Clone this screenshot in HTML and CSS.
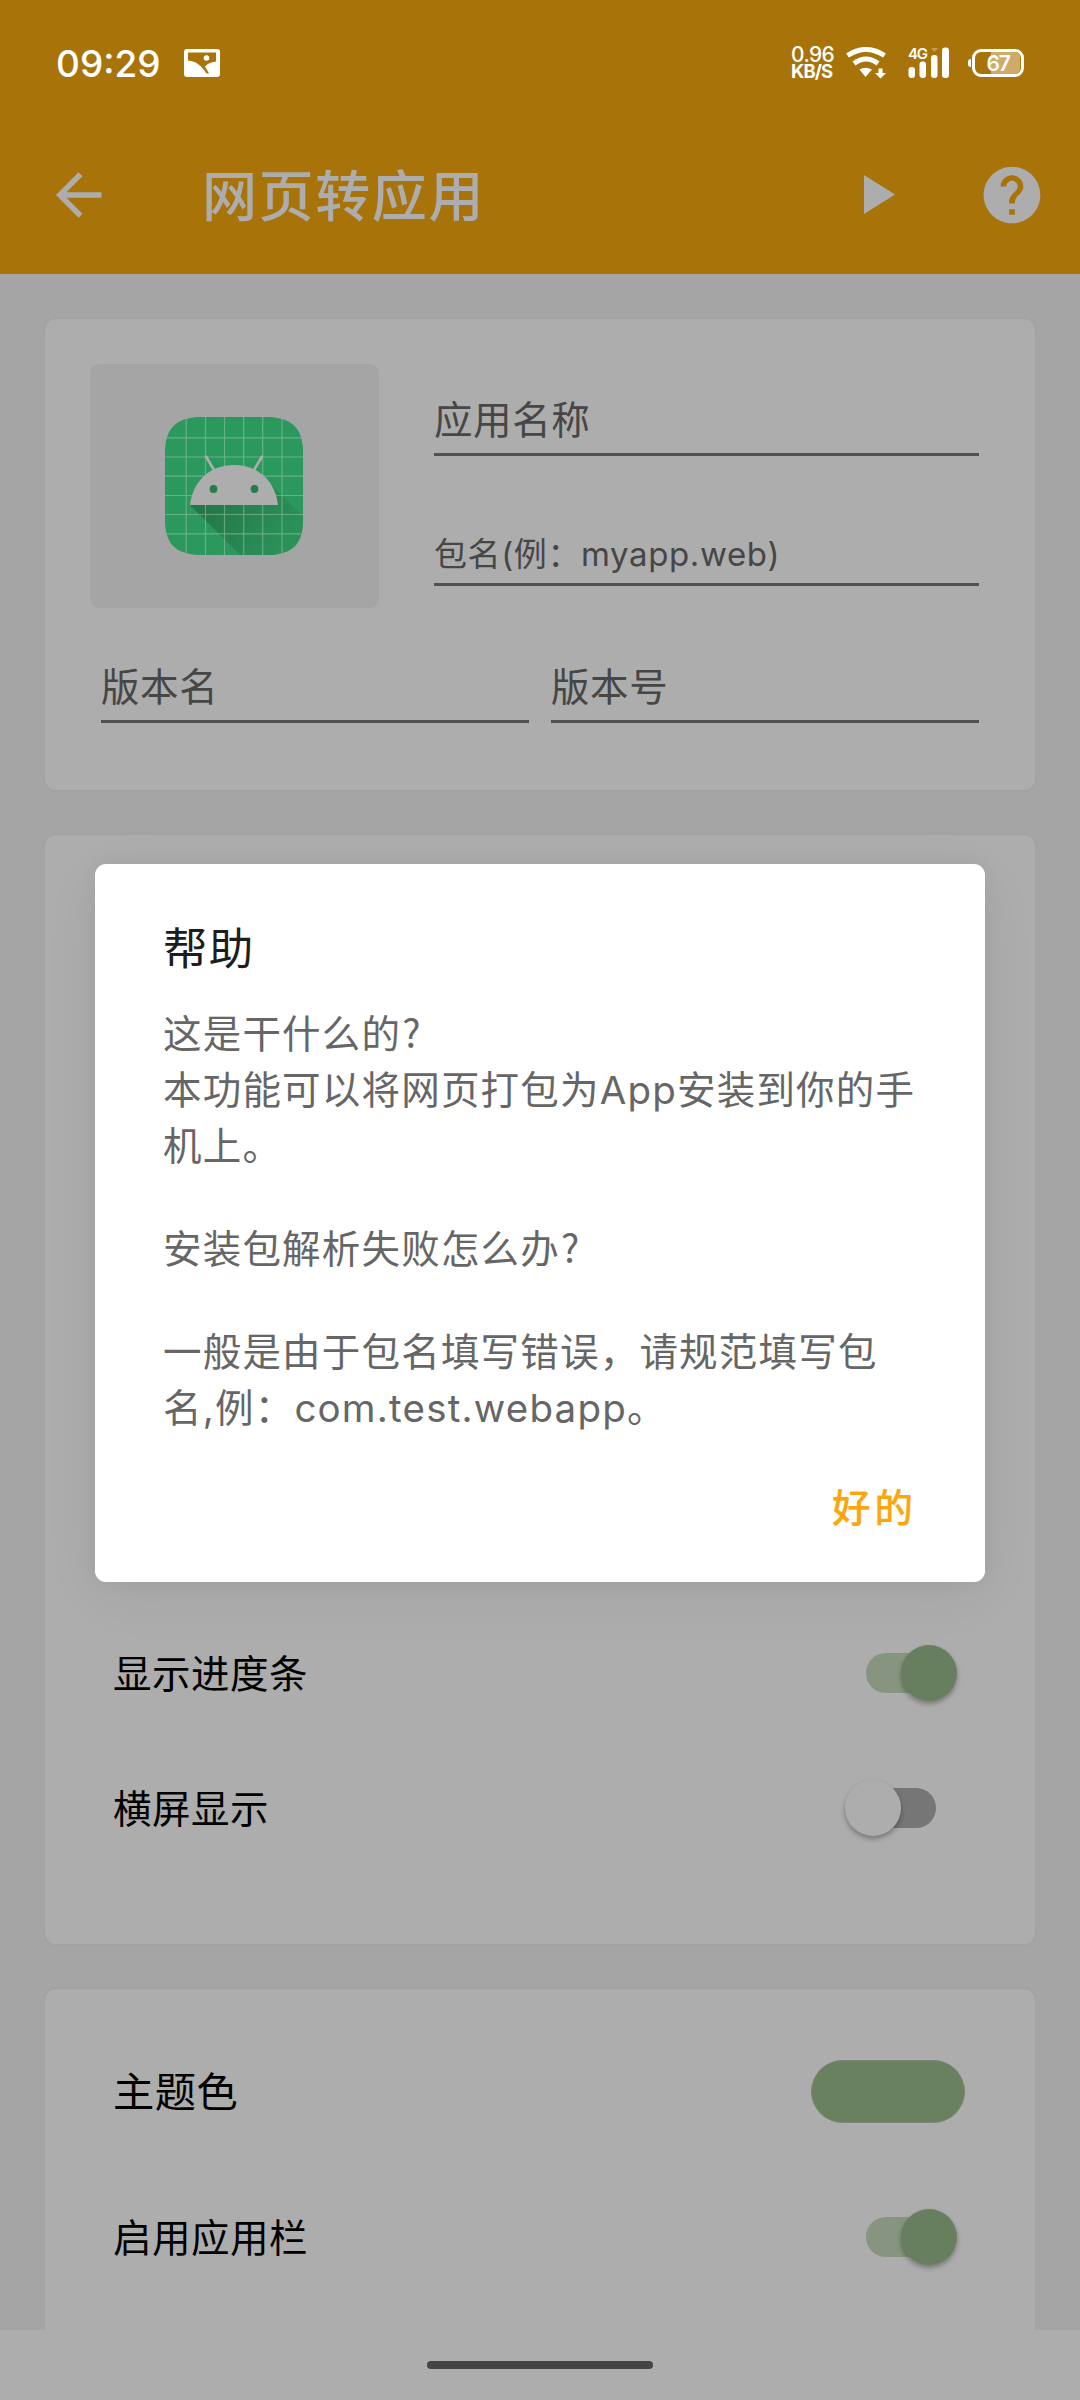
FILE: index.html
```
<!DOCTYPE html>
<html lang="zh-CN">
<head>
<meta charset="utf-8">
<title>网页转应用</title>
<link rel="stylesheet" href="styles.css">
</head>
<body>
<div class="screen">
  <header class="header">
    <div class="status">
      <span class="clock">09:29</span>
      <svg class="picture" width="36" height="28" viewBox="0 0 36 28">
        <path fill="#fff" fill-rule="evenodd" d="M3 0H33Q36 0 36 3V25Q36 28 33 28H3Q0 28 0 25V3Q0 0 3 0ZM4 3.500V11.500C12 12 18 17 22.500 24.500H25L21 17.500C23 15 27 13 32 12.500V3.500Z"/>
        <circle cx="22.500" cy="9" r="2.800" fill="#fff"/>
      </svg>
      <div class="status-right">
        <div class="rate"><span>0.96</span><b>KB/S</b></div>
        <svg class="wifi" width="40" height="32" viewBox="0 0 40 32">
          <g fill="none" stroke="#fff" stroke-width="5">
            <path d="M1.500 8.500Q20 -3.500 38.500 8.500"/>
            <path d="M8 16.500Q20 7.500 32 16.500"/>
          </g>
          <path fill="#fff" d="M13.500 22.500Q19.500 19 26 22.500L19.500 30ZM32.500 21.500h4v4.500h3.500L34.500 31.500L29 26h3.500Z"/>
        </svg>
        <div class="signal">
          <span class="gen">4G</span>
          <svg width="42" height="32" viewBox="0 0 42 32">
            <g fill="#fff">
              <rect x="0.500" y="20" width="6.500" height="11" rx="3"/>
              <rect x="11.500" y="14.500" width="6.500" height="16.500" rx="3"/>
              <rect x="23" y="8" width="6.500" height="23" rx="3"/>
              <rect x="34" y="0.500" width="7" height="30.500" rx="3"/>
            </g>
            <path fill="#fff" opacity=".3" d="M23 1h7l-3.500 4z"/>
          </svg>
        </div>
        <div class="battery"><i></i><span>67</span></div>
      </div>
    </div>
    <div class="toolbar">
      <svg class="back" width="46" height="46" viewBox="0 0 46 46"><path fill="none" stroke="#adadad" stroke-width="5.500" d="M24.500 2.300L3.800 23L24.500 43.700M4 23H45.500"/></svg>
      <h1>网页转应用</h1>
      <svg class="play" width="31" height="39" viewBox="0 0 31 39"><path fill="#adadad" d="M0 0L31 19.500L0 39Z"/></svg>
      <svg class="help" width="68" height="68" viewBox="0 0 24 24"><path fill="#adadad" d="M12 2C6.480 2 2 6.480 2 12s4.480 10 10 10 10-4.480 10-10S17.520 2 12 2zm1 17h-2v-2h2v2zm2.070-7.750l-.9.920C13.450 12.900 13 13.500 13 15h-2v-.5c0-1.100.45-2.100 1.170-2.830l1.240-1.260c.37-.36.59-.86.59-1.410 0-1.100-.9-2-2-2s-2 .9-2 2H8c0-2.210 1.790-4 4-4s4 1.790 4 4c0 .88-.36 1.680-.93 2.250z"/></svg>
    </div>
  </header>

  <main class="content">
    <section class="card app-info">
      <div class="top">
        <div class="icon-box">
          <svg width="138" height="138" viewBox="0 0 138 138">
            <defs>
              <linearGradient id="shade" gradientUnits="userSpaceOnUse" x1="35" y1="80" x2="115" y2="138">
                <stop offset="0" stop-color="#237546"/><stop offset="1" stop-color="#2a9259"/>
              </linearGradient>
              <clipPath id="mask"><path d="M32 0H106C128 2 137 12 138 33V105C137 127 128 136 106 138H32C10 136 1 127 0 105V33C1 12 10 2 32 0Z"/></clipPath>
            </defs>
            <g clip-path="url(#mask)">
              <rect width="138" height="138" fill="#2b985e"/>
              <path fill="url(#shade)" d="M25 88L76 139H139V100L104 66Z"/>
              <path fill="none" stroke="#9bc5a6" stroke-opacity=".55" stroke-width="1.200" d="M21.200 0V138M40.500 0V138M59.500 0V138M78.700 0V138M97.700 0V138M117 0V138M0 20.800H138M0 40H138M0 59.200H138M0 78.500H138M0 97.500H138M0 116.800H138"/>
            </g>
            <path fill="#adadad" d="M25 88C28 62 47 48 69 48S110 62 113 88Z"/>
            <path stroke="#adadad" stroke-width="2.600" stroke-linecap="round" d="M41 39.500L49 53M97 39.500L89 53"/>
            <circle cx="48.500" cy="72" r="3.900" fill="#257d4d"/><circle cx="89.500" cy="72" r="3.900" fill="#257d4d"/>
          </svg>
        </div>
        <div class="names">
          <div class="field">应用名称</div>
          <div class="field small">包名(例：myapp.web)</div>
        </div>
      </div>
      <div class="versions">
        <div class="field">版本名</div>
        <div class="field">版本号</div>
      </div>
    </section>

    <section class="card options">
      <div class="row"><span>显示进度条</span><div class="switch on"><i></i></div></div>
      <div class="row"><span>横屏显示</span><div class="switch"><i></i></div></div>
    </section>

    <section class="card theme">
      <div class="row color"><span>主题色</span><div class="swatch"></div></div>
      <div class="row"><span>启用应用栏</span><div class="switch on"><i></i></div></div>
    </section>
  </main>

  <nav class="navbar"><div class="handle"></div></nav>

  <div class="dialog">
    <h2>帮助</h2>
    <p>这是干什么的<span class="mark">?</span><br>本功能可以将网页打包为App安装到你的手<br>机上。</p>
    <p>安装包解析失败怎么办<span class="mark">?</span></p>
    <p>一般是由于包名填写错误，请规范填写包<br>名,例：com.test.webapp。</p>
    <div class="actions"><button>好的</button></div>
  </div>
</div>
</body>
</html>
```
FILE: styles.css
```
* { box-sizing: border-box; }
body {
  margin: 0;
  font-family: Inter, "Noto Sans CJK SC", sans-serif;
  background: #a5a5a5;
}
h1, h2, p { margin: 0; font-weight: 400; }
svg { display: block; flex: none; }
.screen {
  position: relative;
  width: 1080px;
  height: 2400px;
  overflow: hidden;
  display: flex;
  flex-direction: column;
}

/* status bar and toolbar */
.header { flex: none; height: 274px; background: #a8740a; color: #fff; }
.status { display: flex; align-items: center; height: 126px; padding: 0 56px 0 56px; }
.clock { width: 128px; padding-top: 1px; font-size: 37px; font-weight: 500; line-height: 44px; white-space: nowrap; }
.status-right { margin-left: auto; display: flex; align-items: center; }
.rate { width: 55px; display: flex; flex-direction: column; font-size: 21px; line-height: 16px; letter-spacing: -.6px; white-space: nowrap; font-weight: 500; }
.rate span { height: 16px; }
.rate b { font-size: 18.500px; font-weight: 700; letter-spacing: -.9px; }
.wifi { margin-right: 22px; }
.signal { position: relative; margin-right: 22px; }
.gen { position: absolute; left: 0; top: -1px; font-size: 15px; line-height: 15px; font-weight: 600; letter-spacing: -1.200px; }
.battery {
  position: relative;
  width: 52px; height: 28px;
  border: 3px solid #fff; border-radius: 9px;
  display: flex; align-items: center; justify-content: center;
  font-size: 21px; font-weight: 600; letter-spacing: -1.200px;
}
.battery::before { content: ""; position: absolute; left: -7px; top: 7px; width: 3px; height: 8px; background: #fff; border-radius: 3px 0 0 3px; }
.battery i { position: absolute; right: 1px; top: 0; bottom: 0; width: 29px; background: #cfaa69; border-radius: 0 5px 5px 0; }
.battery span { position: relative; }
.toolbar { display: flex; align-items: center; height: 137px; padding: 0 34px 0 56px; }
.toolbar h1 { margin-left: 100px; padding-top: 3px; font-size: 55px; font-weight: 500; letter-spacing: 1.600px; line-height: 80px; color: #adadad; }
.play { margin-left: auto; }
.help { margin-left: 83px; }

/* cards */
.content { flex: 1; min-height: 0; overflow: hidden; padding: 45px 45px 0; display: flex; flex-direction: column; gap: 45px; }
.card { flex: none; background: #adadad; border-radius: 11px; box-shadow: 0 0 2px 1px #a0a0a0; color: #000; font-size: 38.500px; }
.app-info { height: 471px; padding: 45px 56px 0 45px; }
.top { display: flex; gap: 55px; }
.icon-box { width: 289px; height: 244px; flex: none; border-radius: 9px; background: #a5a5a5; display: flex; align-items: center; justify-content: center; padding-right: 2px; }
.names { flex: 1; padding-top: 22px; }
.field { height: 70px; line-height: 70px; border-bottom: 3px solid #515151; color: #464646; letter-spacing: .6px; white-space: nowrap; }
.names .field:first-child { line-height: 68px; }
.field.small { margin-top: 60px; font-size: 33px; line-height: 77px; letter-spacing: .6px; }
.versions { display: grid; grid-template-columns: 1fr 1fr; gap: 22px; margin: 45px 0 0 11px; }
.versions .field { line-height: 68px; }
.row { display: flex; align-items: center; justify-content: space-between; height: 135px; padding: 0 99px 0 68px; letter-spacing: .5px; }
.row span { padding-bottom: 4px; }
.options { height: 1109px; padding-top: 770px; }
.theme { height: 420px; padding-top: 34px; }
.row.color { height: 136px; padding-right: 70px; font-size: 41.250px; }
.row.color + .row { margin-top: 10px; }
.switch { position: relative; width: 70px; height: 40px; border-radius: 20px; background: #767676; }
.switch i { position: absolute; left: -21px; top: -8px; width: 56px; height: 56px; border-radius: 50%; background: #adadad; box-shadow: 0 3px 5px rgba(0,0,0,.3); }
.switch.on { background: #879580; }
.switch.on i { left: 35px; background: #687f5f; }
.swatch { width: 154px; height: 63px; border-radius: 32px; background: #6a8160; border: 1px solid #7a8673; }

.navbar { flex: none; height: 70px; background: #adadad; display: flex; justify-content: center; padding-top: 31px; }
.handle { width: 226px; height: 8px; border-radius: 4px; background: #444; }

/* help dialog */
.dialog {
  position: absolute; left: 95px; top: 864px;
  width: 890px; height: 718px;
  padding: 55px 68px 0;
  background: #fff; border-radius: 11px;
  box-shadow: 0 14px 60px rgba(0,0,0,.05), 0 0 20px rgba(0,0,0,.05);
  font-size: 38.500px; line-height: 56px; letter-spacing: 1.200px;
  color: #666; white-space: nowrap;
}
.dialog h2 { font-size: 44.500px; line-height: 60px; color: #1d1d1d; margin-bottom: 27px; }
.dialog p + p { margin-top: 47px; }
.mark { margin-left: 1px; font-family: "Noto Sans CJK SC", sans-serif; line-height: 1; }
.actions { display: flex; justify-content: flex-end; margin-top: 44px; }
.actions button { border: 0; background: none; padding: 0; font: inherit; font-weight: 500; letter-spacing: 4px; color: #fba60c; -webkit-text-stroke: .2px #fba60c; }
```
